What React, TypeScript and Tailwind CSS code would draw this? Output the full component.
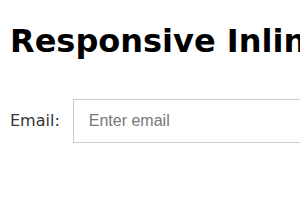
export default function App() {
  return (
    <div className="h-[210px] w-[300px] overflow-hidden bg-white px-[10px] font-['DejaVu_Sans',sans-serif]">
      <h2 className="mt-[23px] whitespace-nowrap text-[32px] font-bold leading-[37px] text-black">
        Responsive Inline Form
      </h2>
      <form className="mt-[39px] flex items-center gap-[13px]">
        <label htmlFor="email" className="shrink-0 text-[16px] text-[#333]">
          Email:
        </label>
        <input
          id="email"
          type="email"
          placeholder="Enter email"
          className="h-[44px] w-[400px] shrink-0 border border-[#ccc] px-[15px] font-['Liberation_Sans',Arial,sans-serif] text-[16px] outline-none placeholder:text-[#777]"
        />
      </form>
    </div>
  );
}
